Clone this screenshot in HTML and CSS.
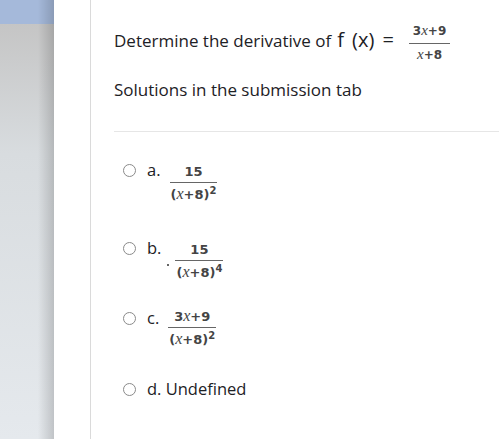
FILE: index.html
```html
<!DOCTYPE html>
<html lang="en">
<head>
  <meta charset="UTF-8">
  <title>Question</title>
  <link rel="stylesheet" href="styles.css">
</head>
<body>
  <div class="page">
    <div class="sidebar"></div>
    <div class="main">
      <div class="qtext">
        <div class="question">
          <span>Determine the derivative of</span>
          <span class="fx">f (x) =</span>
          <span class="frac big"><span class="num">3<i>x</i>+9</span><span class="den"><i>x</i>+8</span></span>
        </div>
        <div class="note">Solutions in the submission tab</div>
      </div>

      <div class="answers">
        <div class="answer ans-a">
          <span class="radio"></span><span class="label">a.</span>
          <span class="frac"><span class="num">15</span><span class="den">(<i>x</i>+8)<sup>2</sup></span></span>
        </div>
        <div class="answer ans-b">
          <span class="radio"></span><span class="label">b.</span><span class="dot"></span>
          <span class="frac"><span class="num">15</span><span class="den">(<i>x</i>+8)<sup>4</sup></span></span>
        </div>
        <div class="answer ans-c">
          <span class="radio"></span><span class="label">c.</span>
          <span class="frac"><span class="num">3<i>x</i>+9</span><span class="den">(<i>x</i>+8)<sup>2</sup></span></span>
        </div>
        <div class="answer ans-d">
          <span class="radio"></span><span class="label">d. Undefined</span>
        </div>
      </div>
    </div>
  </div>
</body>
</html>
```

FILE: styles.css
```css
body {
  margin: 0;
  background-color: white;
  color: #1d2125;
  font-family: "Open Sans", "Noto Sans", sans-serif;
  font-size: 16px;
}
.page {
  display: flex;
  height: 439px;
  overflow: hidden;
}
.sidebar {
  width: 54px;
  flex-shrink: 0;
  background:
    linear-gradient(to right, rgba(0, 0, 0, 0) 70%, rgba(0, 0, 0, 0.16) 100%),
    linear-gradient(to bottom, #a5b9da 0, #a5b9da 24px, #c5c5c5 24px, #d8dcdf 35%, #e5e9ed 100%);
}
.main {
  flex: 1;
  margin-left: 36px;
  border-left: 1px solid #dadada;
  padding-left: 23px;
}

.question {
  display: flex;
  align-items: baseline;
  height: 24px;
  margin-top: 28px;
  font-size: 17px;
  line-height: 24px;
}
.fx {
  font-size: 20px;
  margin-left: 6px;
  word-spacing: 3px;
}
.note {
  margin-top: 26px;
  padding-bottom: 29px;
  border-bottom: 1px solid #e6e6e6;
  font-size: 17px;
  line-height: 24px;
}

.frac {
  text-align: center;
  font-family: "DejaVu Sans", Verdana, sans-serif;
  font-weight: bold;
  font-size: 13px;
  color: #444;
  line-height: 13px;
}
.frac i {
  font-family: "Liberation Serif", "DejaVu Serif", serif;
  font-style: italic;
  font-weight: normal;
  font-size: 16px;
  line-height: 13px;
}
.frac .num {
  display: block;
  padding-bottom: 4px;
  border-bottom: 1.5px solid #666;
}
.frac .den {
  display: block;
  padding: 4px 1px 0;
}
.frac sup {
  font-size: 10px;
  line-height: 0;
  vertical-align: 5px;
}
.frac.big {
  align-self: center;
  position: relative;
  top: 3px;
  margin-left: 15px;
  width: 41px;
  font-size: 12px;
}
.frac.big i {
  font-size: 15px;
}
.frac.big .num {
  padding-bottom: 5px;
}

.answers {
  padding-left: 9px;
}
.answer {
  display: flex;
  align-items: baseline;
  line-height: 22px;
  font-size: 16.5px;
}
.ans-a { margin-top: 27px; height: 78px; }
.ans-b { height: 70px; }
.ans-c { height: 71px; }
.ans-d { height: 22px; }
.radio {
  width: 11px;
  height: 11px;
  border: 1px solid #8a8a8a;
  border-radius: 50%;
  margin-right: 11px;
  position: relative;
  top: 1px;
}
.label {
  margin-right: 9px;
}
.ans-b .label {
  margin-right: 6px;
}
.ans-c .frac {
  position: relative;
  top: -3px;
}
.dot {
  width: 2px;
  height: 2px;
  background-color: #666;
  margin-right: 6px;
  position: relative;
  top: 12px;
}
```
